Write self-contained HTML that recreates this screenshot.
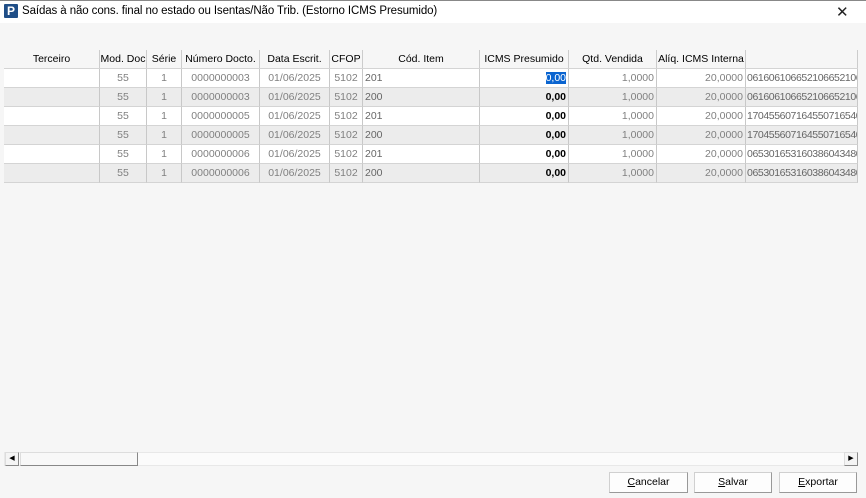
<!DOCTYPE html>
<html><head><meta charset="utf-8"><style>
*{margin:0;padding:0;box-sizing:border-box}
body{width:866px;height:498px;background:#f6f6f6;font-family:"Liberation Sans",Tahoma,sans-serif;font-size:10.5px;position:relative;overflow:hidden}
.a{position:absolute}
.title{left:0;top:0;width:866px;height:23px;background:#fff;border-top:1px solid #888}
.logo{left:4px;top:4px;width:14px;height:14px;background:#1f4e87;color:#fff;font-weight:bold;font-size:12px;line-height:14px;text-align:center;border-radius:1px}
.tt{left:22px;top:5px;font-size:11.5px;color:#000;letter-spacing:-0.1px}
.x{left:836px;top:3px;font-size:15px;color:#222}
.h{top:50px;height:18px;text-align:center;line-height:18px;color:#000;border-right:1px solid #ccc;white-space:nowrap;overflow:hidden}
.c{height:19px;line-height:18px;border-right:1px solid #c8c8c8;border-bottom:1px solid #d4d4d4;color:#808080;padding:0 2px;white-space:nowrap;overflow:hidden}
.btn{top:472px;height:21px;background:#fdfdfd;border:1px solid #d0d0d0;border-right-color:#999;border-bottom-color:#999;text-align:center;line-height:19px;font-size:10.5px}
</style></head><body>
<div class="a title"></div>
<div class="a logo">P</div>
<div class="a tt">Saídas à não cons. final no estado ou Isentas/Não Trib. (Estorno ICMS Presumido)</div>
<div class="a x">✕</div>
<div id="g"></div>
<div class="a" style="left:4px;top:452px;width:854px;height:14px;background:#fbfbfb;border:1px solid #e8e8e8"></div>
<div class="a" style="left:5px;top:452px;width:14px;height:14px;background:#f4f4f4;border:1px solid #ddd;border-right-color:#888;border-bottom-color:#888;font-size:7px;line-height:12px;text-align:center">◀</div>
<div class="a" style="left:20px;top:452px;width:118px;height:14px;background:#f8f8f8;border:1px solid #ddd;border-right-color:#888;border-bottom-color:#888"></div>
<div class="a" style="left:844px;top:452px;width:14px;height:14px;background:#f4f4f4;border:1px solid #ddd;border-right-color:#888;border-bottom-color:#888;font-size:7px;line-height:12px;text-align:center">▶</div>
<div class="a btn" style="left:609px;width:79px"><u>C</u>ancelar</div>
<div class="a btn" style="left:694px;width:78px"><u>S</u>alvar</div>
<div class="a btn" style="left:779px;width:78px"><u>E</u>xportar</div>
<script>
var cols=[[4,100,"Terceiro","l"],[100,147,"Mod. Doc","c"],[147,182,"Série","c"],[182,260,"Número Docto.","c"],[260,330,"Data Escrit.","c"],[330,363,"CFOP","c"],[363,480,"Cód. Item","l"],[480,569,"ICMS Presumido","r"],[569,657,"Qtd. Vendida","r"],[657,746,"Alíq. ICMS Interna","r"],[746,858,"","l"]];
var ids=["061606106652106652106","061606106652106652106","170455607164550716540","170455607164550716540","065301653160386043480","065301653160386043480"];
var docs=["0000000003","0000000003","0000000005","0000000005","0000000006","0000000006"];
var h="";
cols.forEach(function(c){h+='<div class="a h" style="left:'+c[0]+'px;width:'+(c[1]-c[0])+'px">'+c[2]+'</div>';});
h+='<div class="a" style="left:4px;top:68px;width:854px;height:1px;background:#d4d4d4"></div>';
for(var r=0;r<6;r++){
 var y=68+r*19+1, bg=r%2?"#ececec":"#fff";
 var v=["",'55','1',docs[r],'01/06/2025','5102',r%2?'200':'201','0,00','1,0000','20,0000',ids[r]];
 cols.forEach(function(c,i){
  var al=(i==6||i==10||i==0)?"left":(i>=7?"right":"center");
  var st="left:"+c[0]+"px;top:"+y+"px;width:"+(c[1]-c[0])+"px;background:"+bg+";text-align:"+al+";";
  if(i==7)st+="color:#000;font-weight:bold;";
  if(i==6||i==10)st+="color:#666;";
  if(i==10)st+="letter-spacing:-0.4px;padding-left:1px;";
  var t=v[i];
  if(i==7&&r==0)t='<span style="background:#0a64d0;color:#fff;font-weight:normal">0,00</span>';
  h+='<div class="a c" style="'+st+'">'+t+'</div>';
 });
}
document.getElementById("g").innerHTML=h;
</script>
</body></html>
